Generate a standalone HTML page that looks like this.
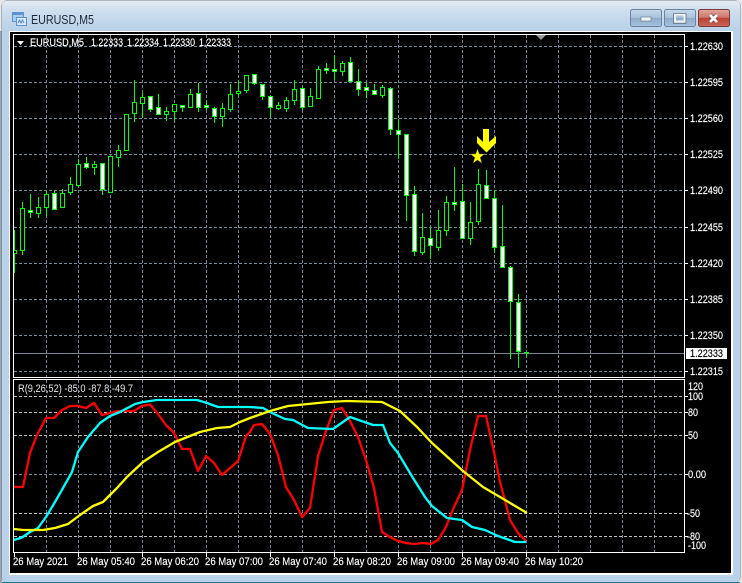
<!DOCTYPE html>
<html><head><meta charset="utf-8"><title>EURUSD,M5</title>
<style>
html,body{margin:0;padding:0;background:#e8e8e8;width:742px;height:583px;overflow:hidden}
svg{display:block}
text{font-family:"Liberation Sans",sans-serif;font-size:11px;fill:#fff;stroke:#fff;stroke-width:.15}
</style></head><body>
<svg width="742" height="583" viewBox="0 0 742 583" xmlns="http://www.w3.org/2000/svg">
<defs>
<linearGradient id="tb" x1="0" y1="0" x2="0" y2="1"><stop offset="0" stop-color="#e2ebf3"/><stop offset=".3" stop-color="#cfdfee"/><stop offset="1" stop-color="#b7d0e9"/></linearGradient>
<linearGradient id="btn" x1="0" y1="0" x2="0" y2="1"><stop offset="0" stop-color="#c6d9ec"/><stop offset=".48" stop-color="#a9c2dc"/><stop offset=".5" stop-color="#8eabca"/><stop offset="1" stop-color="#a6c2de"/></linearGradient>
<linearGradient id="cl" x1="0" y1="0" x2="0" y2="1"><stop offset="0" stop-color="#e0a89f"/><stop offset=".48" stop-color="#cf7468"/><stop offset=".5" stop-color="#be3f33"/><stop offset="1" stop-color="#c8655a"/></linearGradient>
<clipPath id="mc"><rect x="14" y="35" width="670" height="342"/></clipPath>
<clipPath id="sc"><rect x="14" y="380" width="670" height="172"/></clipPath>
</defs>

<!-- window frame -->
<rect x="0" y="0" width="742" height="583" fill="#e8e8e8"/>
<rect x="0" y="31" width="2" height="552" fill="#9aa4ae"/>
<rect x="1.5" y="0.5" width="739" height="582" rx="5" fill="#6d8290"/>
<rect x="2" y="1" width="738" height="581" rx="4" fill="#b9d2ea"/>
<rect x="2" y="1" width="738" height="31" rx="4" fill="url(#tb)"/>
<rect x="2" y="582" width="738" height="1" fill="#1d7d8c"/>
<rect x="9" y="31" width="724" height="544" fill="#fff"/>
<rect x="10" y="32" width="721" height="541" fill="#000"/>

<!-- title icon -->
<rect x="12.5" y="12.5" width="11" height="9" fill="#a9cdf0" stroke="#5f93cf"/>
<rect x="13" y="13" width="10" height="2" fill="#5f93cf"/>
<rect x="16.5" y="17.5" width="10" height="8" fill="#dbeaf8" stroke="#5f93cf"/>
<path d="M18 23l1.5-3 1.5 3 1.5-3 1.5 3" fill="none" stroke="#4f86c6"/>
<text x="31" y="24" textLength="63" lengthAdjust="spacingAndGlyphs" style="font-size:12.5px;fill:#1c2a38;stroke:none">EURUSD,M5</text>

<!-- buttons -->
<rect x="630.5" y="9.5" width="31" height="17" rx="2" fill="url(#btn)" stroke="#6b84a0"/>
<rect x="641" y="17" width="10" height="4" fill="#f0f4f8" stroke="#5e6e80" stroke-width=".6"/>
<rect x="664.5" y="9.5" width="31" height="17" rx="2" fill="url(#btn)" stroke="#6b84a0"/>
<rect x="675" y="14.5" width="9.5" height="7" fill="none" stroke="#f0f4f8" stroke-width="2"/>
<rect x="673.5" y="13.5" width="12.5" height="10" fill="none" stroke="#5e6e80" stroke-width=".7"/>
<rect x="698.5" y="9.5" width="31" height="17" rx="2" fill="url(#cl)" stroke="#7d3a36"/>
<path d="M710 15l7 7M717 15l-7 7" stroke="#6d3a38" stroke-width="4.2"/>
<path d="M710 15l7 7M717 15l-7 7" stroke="#fff" stroke-width="2.8"/>

<!-- main chart border -->
<g shape-rendering="crispEdges">
<rect x="13.5" y="34.5" width="671" height="343" fill="none" stroke="#fff"/>
<rect x="13.5" y="379.5" width="671" height="173" fill="none" stroke="#fff"/>

<!-- main grid -->
<path clip-path="url(#mc)" fill="none" stroke="#778899" stroke-dasharray="3 2" d="M46.5 35V377M78.5 35V377M110.5 35V377M142.5 35V377M174.5 35V377M206.5 35V377M238.5 35V377M270.5 35V377M302.5 35V377M334.5 35V377M366.5 35V377M398.5 35V377M430.5 35V377M462.5 35V377M494.5 35V377M526.5 35V377M558.5 35V377M590.5 35V377M622.5 35V377M654.5 35V377M14 46.5H684M14 82.5H684M14 118.5H684M14 154.5H684M14 190.5H684M14 227.5H684M14 263.5H684M14 299.5H684M14 335.5H684M14 371.5H684"/>
<rect x="14" y="353" width="670" height="1" fill="#778899"/>

<!-- wicks -->
<path clip-path="url(#mc)" fill="none" stroke="#00ff00" d="M14.5 230V273M22.5 202V255M30.5 194V218M38.5 197V218M46.5 191V216M54.5 190V209M62.5 189V207M70.5 177V195M78.5 159V187M86.5 157V169M94.5 161V175M102.5 163V195M110.5 156V192M118.5 145V167M126.5 114V150M134.5 80V122M142.5 93V118M150.5 96V112M158.5 94V115M166.5 107V121M174.5 104V121M182.5 105V112M190.5 89V107M198.5 83V112M206.5 101V110M214.5 107V123M222.5 103V127M230.5 84V112M238.5 81V96M246.5 75V93M254.5 74V85M262.5 84V100M270.5 96V117M278.5 102V110M286.5 97V112M294.5 80V105M302.5 87V110M310.5 88V106M318.5 66V98M326.5 63V74M334.5 55V80M342.5 61V76M350.5 57V81M358.5 69V96M366.5 82V98M374.5 84V95M382.5 85V98M390.5 87V135M398.5 119V159M406.5 134V221M414.5 186V256M422.5 213V255M430.5 227V259M438.5 210V251M446.5 196V236M454.5 167V211M462.5 184V238M470.5 202V245M478.5 169V225M486.5 170V198M494.5 190V253M502.5 205V267M510.5 266V359M518.5 294V368M526.5 352V357"/>

<!-- hollow bodies -->
<path clip-path="url(#mc)" fill="#000" stroke="#00ff00" d="M12.5 250.5h4v3h-4zM20.5 208.5h4v42h-4zM36.5 207.5h4v6h-4zM44.5 194.5h4v13h-4zM60.5 193.5h4v14h-4zM68.5 184.5h4v8h-4zM76.5 164.5h4v21h-4zM92.5 164.5h4v3h-4zM108.5 156.5h4v36h-4zM116.5 150.5h4v7h-4zM124.5 114.5h4v36h-4zM132.5 102.5h4v11h-4zM140.5 97.5h4v6h-4zM164.5 111.5h4v3h-4zM172.5 104.5h4v7h-4zM188.5 94.5h4v13h-4zM220.5 108.5h4v8h-4zM228.5 94.5h4v15h-4zM236.5 91.5h4v2h-4zM244.5 75.5h4v15h-4zM276.5 105.5h4v3h-4zM284.5 100.5h4v8h-4zM292.5 89.5h4v11h-4zM308.5 96.5h4v10h-4zM316.5 69.5h4v29h-4zM340.5 63.5h4v8h-4zM380.5 87.5h4v8h-4zM420.5 237.5h4v15h-4zM436.5 230.5h4v17h-4zM444.5 202.5h4v28h-4zM468.5 222.5h4v16h-4zM476.5 184.5h4v37h-4z"/>

<!-- filled bodies -->
<path clip-path="url(#mc)" fill="#fff" stroke="#00ff00" d="M28.5 210.5h4v2h-4zM52.5 193.5h4v16h-4zM84.5 163.5h4v4h-4zM100.5 163.5h4v26h-4zM148.5 96.5h4v13h-4zM156.5 107.5h4v7h-4zM180.5 105.5h4v2h-4zM196.5 93.5h4v14h-4zM204.5 105.5h4v2h-4zM212.5 108.5h4v8h-4zM252.5 74.5h4v9h-4zM260.5 84.5h4v12h-4zM268.5 96.5h4v11h-4zM300.5 88.5h4v19h-4zM324.5 68.5h4v2h-4zM332.5 69.5h4v2h-4zM348.5 62.5h4v19h-4zM356.5 81.5h4v8h-4zM364.5 87.5h4v3h-4zM372.5 90.5h4v4h-4zM388.5 88.5h4v41h-4zM396.5 130.5h4v4h-4zM404.5 134.5h4v61h-4zM412.5 194.5h4v57h-4zM428.5 238.5h4v7h-4zM452.5 202.5h4v2h-4zM460.5 201.5h4v37h-4zM484.5 185.5h4v13h-4zM492.5 198.5h4v49h-4zM500.5 246.5h4v21h-4zM508.5 267.5h4v34h-4zM516.5 302.5h4v49h-4z"/>
<path fill="none" stroke="#00ff00" d="M524 352.5h5"/>

<!-- right ticks -->
<path fill="none" stroke="#fff" d="M685 46.5h3M685 82.5h3M685 118.5h3M685 154.5h3M685 190.5h3M685 227.5h3M685 263.5h3M685 299.5h3M685 335.5h3M685 371.5h3M685 396.5h3M685 412.5h3M685 435.5h3M685 474.5h3M685 513.5h3M685 536.5h3M14.5 553v4M78.5 553v4M142.5 553v4M206.5 553v4M270.5 553v4M334.5 553v4M398.5 553v4M462.5 553v4M526.5 553v4"/>

<!-- sub grid -->
<path clip-path="url(#sc)" fill="none" stroke="#778899" stroke-dasharray="3 2" d="M46.5 380V552M78.5 380V552M110.5 380V552M142.5 380V552M174.5 380V552M206.5 380V552M238.5 380V552M270.5 380V552M302.5 380V552M334.5 380V552M366.5 380V552M398.5 380V552M430.5 380V552M462.5 380V552M494.5 380V552M526.5 380V552M558.5 380V552M590.5 380V552M622.5 380V552M654.5 380V552M14 474.5H684"/>
<path clip-path="url(#sc)" fill="none" stroke="#c0c0c0" stroke-dasharray="3 2" d="M14 396.5H684M14 412.5H684M14 435.5H684M14 513.5H684M14 536.5H684"/>
</g>

<!-- indicator lines -->
<g clip-path="url(#sc)" fill="none" stroke-width="2.3" stroke-linejoin="round">
<polyline stroke="#ff0000" points="14,487 23,487 30,453 37,435 46,418 54,418 62,410 70,406 78,406 86,408 94,403 102,415 110,413 118,411 126,411 134,411 142,406 150,404.5 158,414 166,425 174,433 182,449 190,449 198,471 206,456 214,463 222,475 230,468 238,461 246,436 250,432 254,425 262,424 270,434 278,455 286,487 294,500 302,517 310,508 318,456 326,431 334,410 342,408 350,421 358,437 366,460 374,488 382,532 390,537 398,541 406,543 414,544 422,543 431,544 438,540 446,527 454,507 462,490 470,450 478,416 486,416 494,452 500,482 504,497 510,520 518,533 526,541"/>
<polyline stroke="#00ffff" points="14,540 22,537.5 30,532 38,528 46,517 55,502 63,488 72,472 78,452 88,437 100,423 110,416 120,412 135,404 143,402 157,400 170,400 197,400 207,403 218,407 250,407 263,408 272,413 285,419 293,420 308,428 333,429 350,417 373,425 383,425 390,443 398,453 413,478 425,497 432,506 447,518 462,520 472,527 485,530 498,536 515,542 526,542"/>
<polyline stroke="#ffff00" points="14,529 23,530 43,530 55,528 68,524 80,515 93,506 103,502 117,488 127,477 143,462 158,452 175,442 200,432 217,428 230,427 240,422 250,418 270,411 288,406 328,402 347,401 382,402 400,411 417,427 432,443 463,471 483,487 500,497 527,513"/>
</g>

<!-- signals -->
<polygon fill="#ffff00" points="483,129 489,129 489,142 496,136 496,143 486.5,152.5 477,143 477,136 483,142"/>
<polygon fill="#ffff00" stroke="#7a5a00" stroke-width=".4" points="477.5,149 479.3,154 484.5,154 480.2,157.5 481.8,163 477.5,160 473.2,163 474.8,157.5 470.5,154 475.7,154"/>

<!-- markers -->
<polygon fill="#fff" points="17,41 24,41 20.5,45"/>
<polygon fill="#9a9a9a" points="536,35 546,35 541,40"/>

<!-- legends -->
<text x="30" y="46" textLength="54" lengthAdjust="spacingAndGlyphs">EURUSD,M5</text>
<text x="91" y="46" textLength="32" lengthAdjust="spacingAndGlyphs">1.22333</text>
<text x="127" y="46" textLength="32" lengthAdjust="spacingAndGlyphs">1.22334</text>
<text x="163" y="46" textLength="32" lengthAdjust="spacingAndGlyphs">1.22330</text>
<text x="199" y="46" textLength="32" lengthAdjust="spacingAndGlyphs">1.22333</text>
<text x="18" y="392" textLength="115" lengthAdjust="spacingAndGlyphs" style="fill:#e6e6e6;stroke:none">R(9,26,52) -85.0 -87.8 -49.7</text>

<!-- price labels -->
<text x="690" y="50" textLength="33" lengthAdjust="spacingAndGlyphs">1.22630</text>
<text x="690" y="86" textLength="33" lengthAdjust="spacingAndGlyphs">1.22595</text>
<text x="690" y="122" textLength="33" lengthAdjust="spacingAndGlyphs">1.22560</text>
<text x="690" y="158" textLength="33" lengthAdjust="spacingAndGlyphs">1.22525</text>
<text x="690" y="194" textLength="33" lengthAdjust="spacingAndGlyphs">1.22490</text>
<text x="690" y="231" textLength="33" lengthAdjust="spacingAndGlyphs">1.22455</text>
<text x="690" y="267" textLength="33" lengthAdjust="spacingAndGlyphs">1.22420</text>
<text x="690" y="303" textLength="33" lengthAdjust="spacingAndGlyphs">1.22385</text>
<text x="690" y="339" textLength="33" lengthAdjust="spacingAndGlyphs">1.22350</text>
<text x="690" y="375" textLength="33" lengthAdjust="spacingAndGlyphs">1.22315</text>
<rect x="686" y="348" width="41" height="11" fill="#fff" shape-rendering="crispEdges"/>
<text x="690" y="357" textLength="33" lengthAdjust="spacingAndGlyphs" style="fill:#000;stroke:#000">1.22333</text>

<!-- sub labels -->
<text x="688" y="390" textLength="15" lengthAdjust="spacingAndGlyphs">120</text>
<text x="688" y="400" textLength="15" lengthAdjust="spacingAndGlyphs">100</text>
<text x="688" y="416" textLength="10" lengthAdjust="spacingAndGlyphs">80</text>
<text x="688" y="439" textLength="10" lengthAdjust="spacingAndGlyphs">50</text>
<text x="688" y="478" textLength="18" lengthAdjust="spacingAndGlyphs">0.00</text>
<text x="687" y="517" textLength="13" lengthAdjust="spacingAndGlyphs">-50</text>
<text x="687" y="540" textLength="13" lengthAdjust="spacingAndGlyphs">-80</text>
<text x="688" y="549" textLength="18" lengthAdjust="spacingAndGlyphs">-100</text>

<!-- time labels -->
<text x="13" y="565" textLength="55" lengthAdjust="spacingAndGlyphs">26 May 2021</text>
<text x="77" y="565" textLength="58" lengthAdjust="spacingAndGlyphs">26 May 05:40</text>
<text x="141" y="565" textLength="58" lengthAdjust="spacingAndGlyphs">26 May 06:20</text>
<text x="205" y="565" textLength="58" lengthAdjust="spacingAndGlyphs">26 May 07:00</text>
<text x="269" y="565" textLength="58" lengthAdjust="spacingAndGlyphs">26 May 07:40</text>
<text x="333" y="565" textLength="58" lengthAdjust="spacingAndGlyphs">26 May 08:20</text>
<text x="397" y="565" textLength="58" lengthAdjust="spacingAndGlyphs">26 May 09:00</text>
<text x="461" y="565" textLength="58" lengthAdjust="spacingAndGlyphs">26 May 09:40</text>
<text x="525" y="565" textLength="58" lengthAdjust="spacingAndGlyphs">26 May 10:20</text>
</svg>
</body></html>
